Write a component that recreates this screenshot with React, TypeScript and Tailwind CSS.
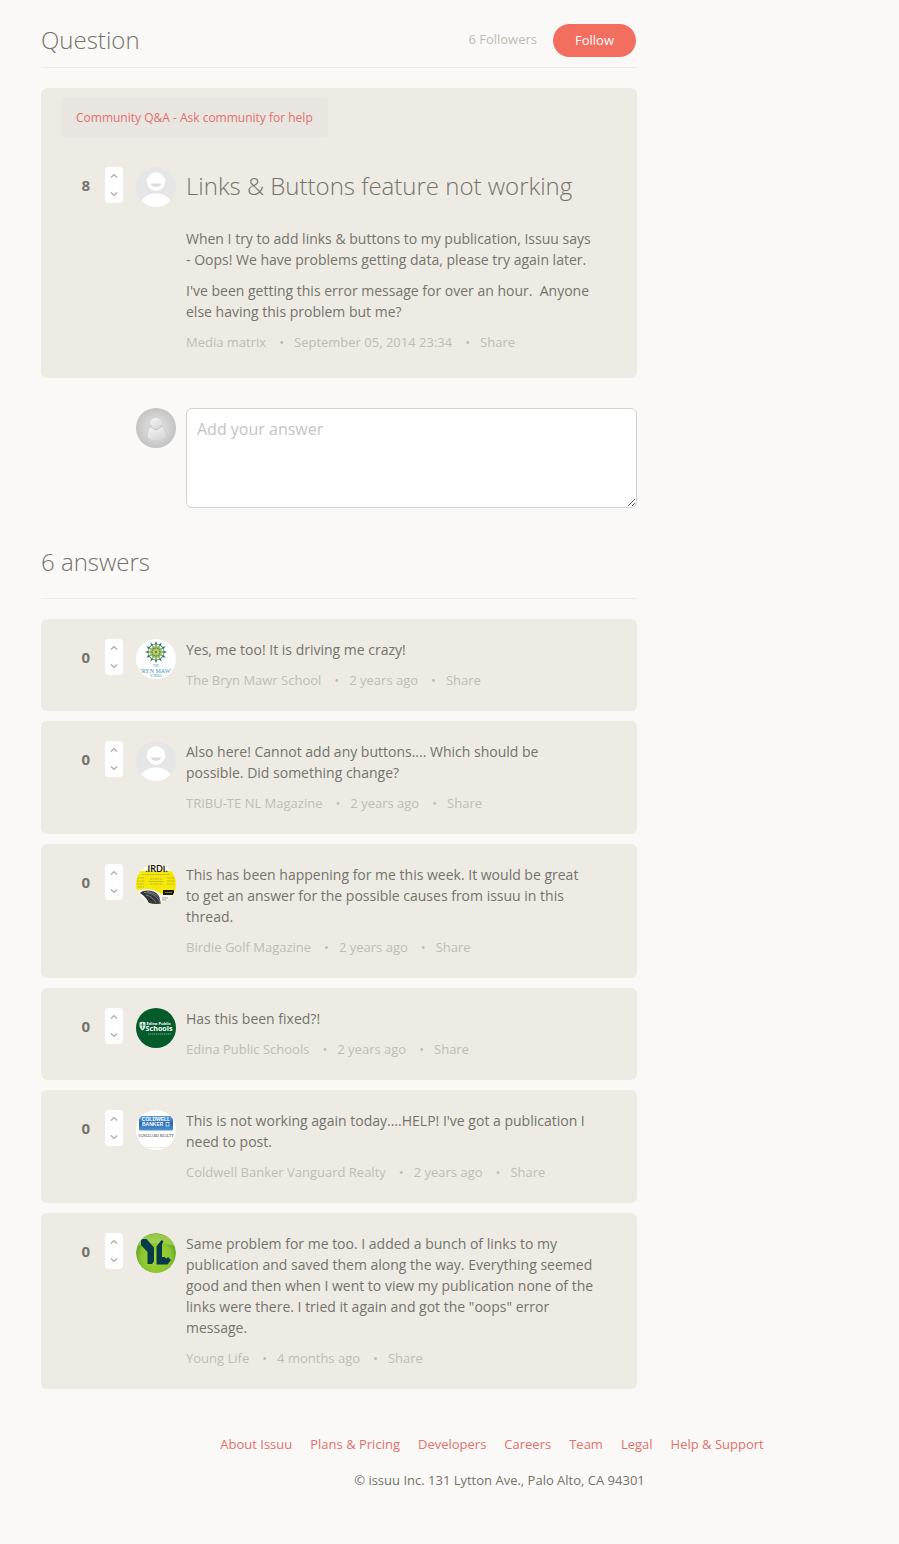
import type { ReactNode } from "react";

const DefaultAvatar = () => (
  <svg viewBox="0 0 40 40" className="size-10 shrink-0 rounded-full" aria-hidden>
    <rect width="40" height="40" fill="#e6e6e7" />
    <circle cx="20" cy="14.5" r="9.3" fill="#fff" />
    <path d="M14.5 16.4h11c-.8 2.4-3 3.400-5.500 3.400s-4.700-1-5.500-3.400z" fill="#dcdcdd" />
    <ellipse cx="20" cy="38" rx="15.500" ry="11.500" fill="#fff" />
  </svg>
);

const GuestAvatar = () => (
  <svg viewBox="0 0 40 40" className="size-10 shrink-0 rounded-full" aria-hidden>
    <defs>
      <radialGradient id="guestBg">
        <stop offset="0%" stopColor="#dedede" />
        <stop offset="60%" stopColor="#d3d3d3" />
        <stop offset="100%" stopColor="#c3c3c3" />
      </radialGradient>
      <linearGradient id="guestBody" x1="0" y1="0" x2="0.6" y2="1">
        <stop offset="0%" stopColor="#f6f6f6" />
        <stop offset="100%" stopColor="#dadada" />
      </linearGradient>
    </defs>
    <rect width="40" height="40" fill="url(#guestBg)" />
    <path d="M16 18c-3 2-4 6-4 10 0 3 3 4 8.500 4S29 31 29 28c0-4-1.500-8-4.500-10z" fill="url(#guestBody)" />
    <circle cx="20" cy="15.500" r="5.800" fill="url(#guestBody)" />
    <path d="M14.500 17c1 3 3 4.500 5.500 4.500s4.500-1.500 5.500-4.500" fill="none" stroke="#bfbfbf" strokeWidth=".9" />
  </svg>
);

const petals = [0, 30, 60, 90, 120, 150, 180, 210, 240, 270, 300, 330];

const BrynMawrAvatar = () => (
  <svg viewBox="0 0 40 40" className="size-10 shrink-0 rounded-full" aria-hidden>
    <rect width="40" height="40" fill="#fff" />
    {petals.map((a) => (
      <g key={a} transform={`rotate(${a} 20 13)`}>
        <path d="M20 2l1.300 3L20 7l-1.300-2z" fill="#3d7d79" />
        <path d="M20 5l2 4-2 4-2-4z" fill="#9dbb55" />
        <circle cx="22" cy="5.500" r=".7" fill="#2e8aa0" />
        <circle cx="20" cy="9" r=".7" fill="#35645c" />
      </g>
    ))}
    <circle cx="20" cy="13" r="3" fill="#c3d36d" />
    <circle cx="20" cy="13" r="1.200" fill="#52876a" />
    <g fontFamily="Liberation Serif, serif" textAnchor="middle" fill="#3c93bb">
      <text x="20" y="28" fontSize="3">THE</text>
      <text x="20" y="34" fontSize="6">'RYN MAW'</text>
      <text x="20" y="38" fontSize="3">SCHOOL</text>
    </g>
  </svg>
);

const BirdieAvatar = () => (
  <svg viewBox="0 0 40 40" className="size-10 shrink-0 rounded-full" aria-hidden>
    <rect width="40" height="40" fill="#f4e80b" />
    <rect width="40" height="7" fill="#fff" />
    <text x="20.500" y="8" fontSize="9" fontWeight="bold" textAnchor="middle" fill="#171714" fontFamily="Lato, sans-serif">.IRDI.</text>
    <g stroke="#c4b915" strokeWidth="1" strokeDasharray="2 .5">
      <path d="M6 10.500h28M14 15h12M13 17.500h14M14 20h12M1 14h7M1 17h8M1 20h7M2 23h6M31 14h8M31 17h8M31 20h7" />
    </g>
    <path d="M0 27c8-3 18-3 25 3l15 1v9H0z" fill="#f5f5f2" />
    <path d="M4 29c5-4 15-3 19 3l2 8H13C12 36 9 32 4 29z" fill="#34373a" />
    <path d="M8 28.500c7 0 13 3 16 10M11 27.500c6 1 10 3 12 6M10 31c5 1 8 4 10 8" stroke="#8c9295" fill="none" strokeWidth=".8" />
    <rect x="27" y="26" width="11" height="5" rx=".5" fill="#171713" />
    <path d="M29 28.500h7" stroke="#aaa323" strokeWidth=".7" />
    <path d="M26 34h6M26 36h4" stroke="#888" strokeWidth=".7" />
  </svg>
);

const EdinaAvatar = () => (
  <svg viewBox="0 0 40 40" className="size-10 shrink-0 rounded-full" aria-hidden>
    <rect width="40" height="40" fill="#035a2a" />
    <path d="M3.500 14.500c1.500-1 4.500-1 6 0v3c0 2.500-1.500 4-3 5-1.500-1-3-2.500-3-5z" fill="#d9e6dd" />
    <path d="M4.500 17h4M6.500 14.500v6" stroke="#35744e" strokeWidth=".8" />
    <g fill="#fff" fontFamily="Open Sans, sans-serif" fontWeight="bold">
      <text x="10.500" y="16.500" fontSize="4">Edina Public</text>
      <text x="9.500" y="23" fontSize="7.200">Schools</text>
    </g>
    <path d="M12 26h23" stroke="#8db49c" strokeWidth=".8" strokeDasharray="1.500 .5" />
  </svg>
);

const ColdwellAvatar = () => (
  <svg viewBox="0 0 40 40" className="size-10 shrink-0 rounded-full" aria-hidden>
    <defs>
      <linearGradient id="coldwellBlue" x1="0" y1="0" x2="0" y2="1">
        <stop offset="0%" stopColor="#5ea0df" />
        <stop offset="50%" stopColor="#2568b2" />
        <stop offset="100%" stopColor="#4e94d4" />
      </linearGradient>
    </defs>
    <rect width="40" height="40" fill="#fff" />
    <rect x="3" y="6" width="34" height="14.500" rx="1" fill="url(#coldwellBlue)" />
    <g fontFamily="Liberation Sans, sans-serif" fontWeight="bold" fill="#fff">
      <text x="20" y="11.300" fontSize="5" textAnchor="middle">COLDWELL</text>
      <text x="6" y="16.300" fontSize="5">BANKER</text>
    </g>
    <rect x="30" y="12.500" width="3" height="3.500" fill="none" stroke="#fff" strokeWidth=".7" />
    <text x="20" y="26.500" fontSize="3.700" textAnchor="middle" fontFamily="Liberation Serif, serif" fill="#26272a">VANGUARD REALTY</text>
    <path d="M10 37.500h20" stroke="#e0e0e0" strokeWidth=".6" />
  </svg>
);

const YoungLifeAvatar = () => (
  <svg viewBox="0 0 40 40" className="size-10 shrink-0 rounded-full" aria-hidden>
    <defs>
      <radialGradient id="youngLifeBg" cx="0.500" cy="0.600">
        <stop offset="0%" stopColor="#a5d734" />
        <stop offset="75%" stopColor="#8cc62f" />
        <stop offset="100%" stopColor="#6aa92b" />
      </radialGradient>
    </defs>
    <circle cx="20" cy="20" r="20" fill="url(#youngLifeBg)" />
    <path d="M1 13C3 5 11 1 20 1s17 4 19 12c-12-4-26-4-38 0z" fill="#b8df65" opacity=".6" />
    <path d="M5 7.500l1.500-1.500h4l7.500 8.500v14l-2 2.500h-4.500V19L5 12z" fill="#073b4a" />
    <path d="M20.500 13.500l5-6.500 2 1.500-1.500 3V24h2.500l2 1.500 1.500-1.500 3 3-3.500 4.500h-11z" fill="#073b4a" />
  </svg>
);

const Chevron = ({ d }: { d: string }) => (
  <svg viewBox="0 0 8 6" className="h-[6px] w-2" fill="none" stroke="#aaa9a5" strokeWidth="1.200" aria-hidden>
    <path d={d} />
  </svg>
);

const Votes = ({ count }: { count: number }) => (
  <div className="flex shrink-0 items-start gap-[15px]">
    <span className="w-[29px] text-right text-[15px] leading-9 font-bold">{count}</span>
    <div className="flex h-9 w-[18px] flex-col rounded-[4px] bg-white">
      <button type="button" aria-label="Vote up" className="flex flex-1 items-center justify-center">
        <Chevron d="M1 4.500l3-3 3 3" />
      </button>
      <button type="button" aria-label="Vote down" className="flex flex-1 items-center justify-center">
        <Chevron d="M1 1.500l3 3 3-3" />
      </button>
    </div>
  </div>
);

const Meta = ({ author, date }: { author: string; date: string }) => (
  <div className="mt-[10px] flex text-[13px] leading-[21px] text-[#bfbdb3]">
    <a href="#author">{author}</a>
    <span className="mr-[10px] ml-[13px]">•</span>
    <span>{date}</span>
    <span className="mr-[10px] ml-[13px]">•</span>
    <a href="#share">Share</a>
  </div>
);

const Entry = ({ votes, avatar, children }: { votes: number; avatar: ReactNode; children: ReactNode }) => (
  <div className="flex items-start">
    <Votes count={votes} />
    <div className="mr-[10px] ml-[13px]">{avatar}</div>
    <div className="min-w-0 flex-1">{children}</div>
  </div>
);

const answers = [
  { author: "The Bryn Mawr School", date: "2 years ago", avatar: <BrynMawrAvatar />, text: "Yes, me too! It is driving me crazy!" },
  { author: "TRIBU-TE NL Magazine", date: "2 years ago", avatar: <DefaultAvatar />, text: "Also here! Cannot add any buttons.... Which should be possible. Did something change?" },
  { author: "Birdie Golf Magazine", date: "2 years ago", avatar: <BirdieAvatar />, text: "This has been happening for me this week. It would be great to get an answer for the possible causes from issuu in this thread." },
  { author: "Edina Public Schools", date: "2 years ago", avatar: <EdinaAvatar />, text: "Has this been fixed?!" },
  { author: "Coldwell Banker Vanguard Realty", date: "2 years ago", avatar: <ColdwellAvatar />, text: "This is not working again today....HELP! I've got a publication I need to post." },
  { author: "Young Life", date: "4 months ago", avatar: <YoungLifeAvatar />, text: "Same problem for me too. I added a bunch of links to my publication and saved them along the way. Everything seemed good and then when I went to view my publication none of the links were there. I tried it again and got the \"oops\" error message." },
];

const footerLinks = ["About Issuu", "Plans & Pricing", "Developers", "Careers", "Team", "Legal", "Help & Support"];

export default function App() {
  return (
    <div className="min-h-screen bg-[#faf9f7] pb-[53px] font-['Open_Sans',sans-serif] text-sm leading-[21px] text-[#74736c]">
      <main className="ml-[41px] max-w-[596px] pt-6">
        <header className="flex items-start justify-between border-b border-[#ecebe8] pb-[10px]">
          <h1 className="text-2xl leading-8 font-light">Question</h1>
          <div className="flex items-start gap-4 pr-px text-[13px]">
            <span className="leading-[30px] text-[#bfbdb3]">6 Followers</span>
            <button type="button" className="h-[33px] rounded-full bg-[#f26e5e] px-[22px] font-medium text-white">
              Follow
            </button>
          </div>
        </header>

        <article className="mt-5 rounded-md bg-[#eeebe4] px-5 pt-[10px] pb-[25px]">
          <a href="#community" className="inline-block rounded-[4px] bg-[#e9e6e1] px-[15px] py-[9px] text-xs leading-[21px] text-[#e2706b]">
            Community Q&amp;A - Ask community for help
          </a>
          <div className="mt-[30px]">
            <Entry votes={8} avatar={<DefaultAvatar />}>
              <h2 className="text-2xl leading-[38px] font-light">Links &amp; Buttons feature not working</h2>
              <p className="mt-[23px]">
                When I try to add links &amp; buttons to my publication, Issuu says
                <br />- Oops! We have problems getting data, please try again later.
              </p>
              <p className="mt-[10px]">
                I've been getting this error message for over an hour.&nbsp; Anyone else having this problem but me?
              </p>
              <Meta author="Media matrix" date="September 05, 2014 23:34" />
            </Entry>
          </div>
        </article>

        <form className="mt-[30px] ml-[95px] flex items-start gap-[10px]">
          <GuestAvatar />
          <textarea
            aria-label="Add your answer"
            placeholder="Add your answer"
            className="block h-[100px] min-w-0 flex-1 rounded-md border border-[#d2d2d3] bg-white px-[10px] py-2 text-base leading-6 placeholder:text-[#c4c4c2]"
          />
        </form>

        <h2 className="mt-[38px] border-b border-[#ecebe8] pb-5 text-2xl leading-8 font-light">6 answers</h2>

        <div className="mt-5 flex flex-col gap-[10px]">
          {answers.map((a) => (
            <article key={a.author} className="rounded-md bg-[#eeebe4] py-5 pr-[43px] pl-5">
              <Entry votes={0} avatar={a.avatar}>
                <p>{a.text}</p>
                <Meta author={a.author} date={a.date} />
              </Entry>
            </article>
          ))}
        </div>
      </main>

      <footer className="mt-[45px] pl-[100px] text-center text-[13px]">
        <nav className="flex flex-wrap justify-center gap-x-[18px] pr-[15px] text-[#e2706b]">
          {footerLinks.map((l) => (
            <a key={l} href="#footer">{l}</a>
          ))}
        </nav>
        <p className="mt-[15px]">© issuu Inc. 131 Lytton Ave., Palo Alto, CA 94301</p>
      </footer>
    </div>
  );
}
